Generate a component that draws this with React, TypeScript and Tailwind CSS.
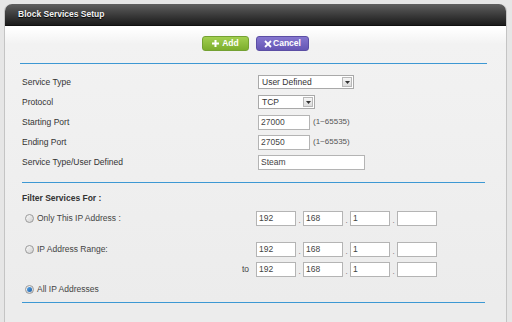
import React from "react";

const font = "font-[family-name:'Liberation_Sans',Arial,sans-serif]";

function Select({ value, width }: { value: string; width: string }) {
  return (
    <div className={`flex h-[14px] items-stretch border border-[#a9a9a9] bg-white ${width}`}>
      <span className="flex flex-1 items-center pl-[3px] text-[8.5px] text-[#333]">{value}</span>
      <span className="my-[1px] mr-[1px] flex w-[10px] items-center justify-center border border-[#b8b8b8] bg-gradient-to-b from-[#f6f6f6] to-[#dcdcdc]">
        <svg width="5" height="3" viewBox="0 0 5 3">
          <path d="M0 0h5L2.5 3z" fill="#333" />
        </svg>
      </span>
    </div>
  );
}

function Field({ value, width }: { value: string; width: string }) {
  return (
    <div
      className={`flex h-[15px] items-center border border-[#b4b4b4] bg-white pl-[2px] text-[8.5px] text-[#444] ${width}`}
    >
      {value}
    </div>
  );
}

function IpRow({ parts }: { parts: string[] }) {
  return (
    <div className="flex items-end">
      {parts.map((p, i) => (
        <React.Fragment key={i}>
          <Field value={p} width="w-[40px]" />
          {i < 3 && <span className="w-[7px] pb-[1px] text-center text-[8px] leading-none text-[#666]">.</span>}
        </React.Fragment>
      ))}
    </div>
  );
}

function Radio({ checked }: { checked?: boolean }) {
  return (
    <span className="flex h-[9px] w-[9px] items-center justify-center rounded-full border border-[#9a9a9a] bg-gradient-to-br from-[#fafafa] to-[#cfcfcf]">
      {checked && <span className="h-[5px] w-[5px] rounded-full bg-gradient-to-br from-[#5aa6e8] to-[#1d5fa6]" />}
    </span>
  );
}

function Row({ label, children }: { label: string; children: React.ReactNode }) {
  return (
    <div className="flex h-[20px] items-center">
      <div className="w-[236px] text-[8.5px] text-[#333]">{label}</div>
      <div className="flex items-center">{children}</div>
    </div>
  );
}

export default function App() {
  return (
    <div className={`h-[322px] w-[512px] overflow-hidden bg-[#e6e6e6] pt-[4px] ${font}`}>
      <div className="ml-[4px] h-[330px] w-[503px] rounded-t-[7px] border-x border-[#c4c4c4] bg-[linear-gradient(to_bottom,#ffffff_0px,#ffffff_24px,#f2f2f2_40px,#ececec_300px)]">
        <div className="flex h-[22px] items-center rounded-t-[7px] border-b border-[#111] bg-gradient-to-b from-[#606060] to-[#1c1c1c] pl-[13px]">
          <span className="text-[8.5px] font-bold text-[#f2f2f2] [text-shadow:0_1px_1px_#000]">Block Services Setup</span>
        </div>

        <div className="flex justify-center gap-[7px] pt-[10px]">
          <button className="flex h-[15px] w-[47px] items-center justify-center gap-[3px] rounded-[3px] border border-[#74a132] bg-gradient-to-b from-[#a2cf4f] to-[#7cae2c] text-[8.5px] font-bold text-white">
            <svg width="7" height="7" viewBox="0 0 7 7">
              <path d="M2.5 0h2v2.5H7v2H4.5V7h-2V4.5H0v-2h2.5z" fill="#fff" />
            </svg>
            Add
          </button>
          <button className="flex h-[15px] w-[53px] items-center justify-center gap-[1px] rounded-[3px] border border-[#5b4ea4] bg-gradient-to-b from-[#8576cf] to-[#6556b4] text-[8.5px] font-bold text-white">
            <svg width="8" height="8" viewBox="0 0 8 8">
              <path d="M1 1l6 6M7 1L1 7" stroke="#fff" strokeWidth="1.8" />
            </svg>
            Cancel
          </button>
        </div>

        <div className="ml-[15px] mr-[19px] mt-[12px] h-[1px] bg-[#3d98d3]" />

        <div className="pl-[17px] pt-[8px]">
          <Row label="Service Type">
            <Select value="User Defined" width="w-[96px]" />
          </Row>
          <Row label="Protocol">
            <Select value="TCP" width="w-[57px]" />
          </Row>
          <Row label="Starting Port">
            <Field value="27000" width="w-[52px]" />
            <span className="ml-[3px] text-[8px] text-[#555]">(1~65535)</span>
          </Row>
          <Row label="Ending Port">
            <Field value="27050" width="w-[52px]" />
            <span className="ml-[3px] text-[8px] text-[#555]">(1~65535)</span>
          </Row>
          <Row label="Service Type/User Defined">
            <Field value="Steam" width="w-[107px]" />
          </Row>
        </div>

        <div className="ml-[17px] mr-[21px] mt-[10px] h-[1px] bg-[#3d98d3]" />

        <div className="pl-[17px]">
          <div className="mt-[8px] flex h-[14px] items-center text-[8.5px] font-bold text-[#333]">Filter Services For :</div>

          <div className="mt-[6px] flex h-[15px] items-center">
            <div className="flex w-[234px] items-center gap-[3px] pl-[3px] text-[8.5px] text-[#444]">
              <Radio />
              <span>Only This IP Address :</span>
            </div>
            <IpRow parts={["192", "168", "1", ""]} />
          </div>

          <div className="mt-[16px] flex h-[15px] items-center">
            <div className="flex w-[234px] items-center gap-[3px] pl-[3px] text-[8.5px] text-[#444]">
              <Radio />
              <span>IP Address Range:</span>
            </div>
            <IpRow parts={["192", "168", "1", ""]} />
          </div>

          <div className="mt-[5px] flex h-[15px] items-center">
            <div className="w-[234px] pr-[7px] text-right text-[8.5px] text-[#444]">to</div>
            <IpRow parts={["192", "168", "1", ""]} />
          </div>

          <div className="mt-[5px] flex h-[14px] items-center gap-[3px] pl-[3px] text-[8.5px] text-[#444]">
            <Radio checked />
            <span>All IP Addresses</span>
          </div>
        </div>

        <div className="ml-[17px] mr-[21px] mt-[6px] h-[1px] bg-[#3d98d3]" />
      </div>
    </div>
  );
}
